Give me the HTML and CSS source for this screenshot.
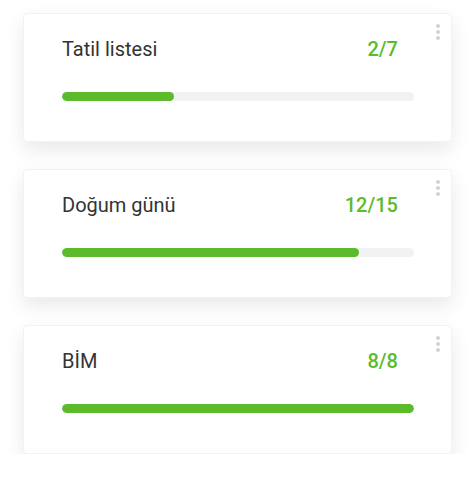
FILE: index.html
```html
<!DOCTYPE html>
<html lang="tr">
<head>
  <meta charset="UTF-8">
  <title>Listeler</title>
  <meta name="viewport" content="width=device-width, initial-scale=1">
  <link rel="stylesheet" href="styles.css">
</head>
<body>
  <div class="lists">
    <div class="card">
      <span class="menu"><i></i><i></i><i></i></span>
      <div class="card-head">
        <span class="title">Tatil listesi</span>
        <span class="count">2/7</span>
      </div>
      <div class="bar"><div class="fill" style="width:31.8%"></div></div>
    </div>
    <div class="card">
      <span class="menu"><i></i><i></i><i></i></span>
      <div class="card-head">
        <span class="title">Doğum günü</span>
        <span class="count">12/15</span>
      </div>
      <div class="bar"><div class="fill" style="width:84.4%"></div></div>
    </div>
    <div class="card">
      <span class="menu"><i></i><i></i><i></i></span>
      <div class="card-head">
        <span class="title">BİM</span>
        <span class="count">8/8</span>
      </div>
      <div class="bar"><div class="fill" style="width:100%"></div></div>
    </div>
  </div>
</body>
</html>
```

FILE: styles.css
```css
body { margin:0; background:#fff; font-family:Roboto, "Liberation Sans", sans-serif; }
.lists { display:flex; flex-direction:column; gap:27px; padding:13px 0 0 23px; width:429px; }
.card { position:relative; box-sizing:border-box; height:129px; background:#fff; border:1px solid #f2f2f2; border-radius:4px; box-shadow:0 8px 20px rgba(0,0,0,0.09); padding:23px 37px 0 38px; }
.card-head { display:flex; justify-content:space-between; align-items:baseline; padding-right:16px; line-height:24px; }
.title { font-size:20px; color:#333; }
.count { font-size:20px; font-weight:500; color:#5bbb2a; }
.bar { margin-top:31px; height:9px; border-radius:5px; background:#f2f2f2; overflow:hidden; }
.fill { height:100%; border-radius:5px; background:#5bbb2a; }
.menu { position:absolute; top:10px; right:11px; display:flex; flex-direction:column; gap:2px; }
.menu i { display:block; width:4px; height:4px; border-radius:50%; background:#d2d2d2; }
```
